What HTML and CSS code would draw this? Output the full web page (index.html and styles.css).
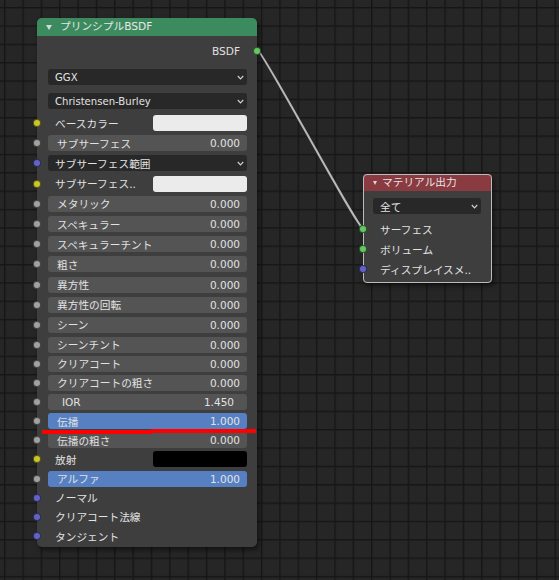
FILE: index.html
```html
<!DOCTYPE html>
<html lang="ja">
<head>
<meta charset="utf-8">
<title>Node Editor</title>
<link rel="stylesheet" href="styles.css">
</head>
<body>
<div class="canvas">
  <svg class="wires" width="559" height="580" viewBox="0 0 559 580">
    <defs>
      <pattern id="grid" x="4" y="7" width="18.35" height="18.35" patternUnits="userSpaceOnUse">
        <rect x="0" y="0" width="18.35" height="1.4" class="gridline"/>
        <rect x="0" y="0" width="1.4" height="18.35" class="gridline"/>
      </pattern>
    </defs>
    <rect x="0" y="0" width="559" height="580" fill="url(#grid)"/>
    <path d="M257.5 50 C 263 51, 357 228, 363.5 229" class="wire-edge"/>
    <path d="M257.5 50 C 263 51, 357 228, 363.5 229" class="wire"/>
  </svg>

  <div class="node node-bsdf">
    <div class="header header-green">
      <span class="tri"></span>
      <span class="title">プリンシプルBSDF</span>
    </div>
    <div class="out-row">
      <span>BSDF</span>
      <span class="socket out green"></span>
    </div>
    <div class="menus">
      <div class="dropdown"><span>GGX</span><svg class="chev" width="7" height="5" viewBox="0 0 7 5"><polyline points="0.8,1 3.5,3.8 6.2,1"/></svg></div>
      <div class="dropdown"><span>Christensen-Burley</span><svg class="chev" width="7" height="5" viewBox="0 0 7 5"><polyline points="0.8,1 3.5,3.8 6.2,1"/></svg></div>
    </div>
    <div class="rows rows-a">
      <div class="row"><span class="socket yellow"></span><span class="label">ベースカラー</span><span class="swatch light"></span></div>
      <div class="row"><span class="socket gray"></span><div class="field"><span class="name">サブサーフェス</span><span>0.000</span></div></div>
      <div class="row"><span class="socket purple"></span><div class="dropdown wide"><span class="name">サブサーフェス範囲</span><svg class="chev" width="7" height="5" viewBox="0 0 7 5"><polyline points="0.8,1 3.5,3.8 6.2,1"/></svg></div></div>
      <div class="row"><span class="socket yellow"></span><span class="label">サブサーフェス..</span><span class="swatch light"></span></div>
      <div class="row"><span class="socket gray"></span><div class="field"><span class="name">メタリック</span><span>0.000</span></div></div>
      <div class="row"><span class="socket gray"></span><div class="field"><span class="name">スペキュラー</span><span>0.000</span></div></div>
      <div class="row"><span class="socket gray"></span><div class="field"><span class="name">スペキュラーチント</span><span>0.000</span></div></div>
      <div class="row"><span class="socket gray"></span><div class="field"><span class="name">粗さ</span><span>0.000</span></div></div>
      <div class="row"><span class="socket gray"></span><div class="field"><span class="name">異方性</span><span>0.000</span></div></div>
      <div class="row"><span class="socket gray"></span><div class="field"><span class="name">異方性の回転</span><span>0.000</span></div></div>
      <div class="row"><span class="socket gray"></span><div class="field"><span class="name">シーン</span><span>0.000</span></div></div>
    </div>
    <div class="rows rows-b">
      <div class="row"><span class="socket gray"></span><div class="field"><span class="name">シーンチント</span><span>0.000</span></div></div>
      <div class="row"><span class="socket gray"></span><div class="field"><span class="name">クリアコート</span><span>0.000</span></div></div>
      <div class="row"><span class="socket gray"></span><div class="field"><span class="name">クリアコートの粗さ</span><span>0.000</span></div></div>
      <div class="row"><span class="socket gray"></span><div class="field field-ior"><span>IOR</span><span>1.450</span></div></div>
      <div class="row"><span class="socket gray"></span><div class="field active"><span class="name">伝播</span><span>1.000</span></div></div>
      <div class="row"><span class="socket gray"></span><div class="field"><span class="name">伝播の粗さ</span><span>0.000</span></div></div>
      <div class="row"><span class="socket yellow"></span><span class="label">放射</span><span class="swatch dark"></span></div>
      <div class="row"><span class="socket gray"></span><div class="field active"><span class="name">アルファ</span><span>1.000</span></div></div>
      <div class="row"><span class="socket purple"></span><span class="label">ノーマル</span></div>
      <div class="row"><span class="socket purple"></span><span class="label">クリアコート法線</span></div>
      <div class="row"><span class="socket purple"></span><span class="label">タンジェント</span></div>
    </div>
  </div>

  <div class="node node-output">
    <div class="header header-red">
      <span class="tri small"></span>
      <span class="title">マテリアル出力</span>
    </div>
    <div class="menus menus-out">
      <div class="dropdown"><span class="name">全て</span><svg class="chev" width="7" height="5" viewBox="0 0 7 5"><polyline points="0.8,1 3.5,3.8 6.2,1"/></svg></div>
    </div>
    <div class="rows rows-out">
      <div class="row"><span class="socket green"></span><span class="label">サーフェス</span></div>
      <div class="row"><span class="socket green"></span><span class="label">ボリューム</span></div>
      <div class="row"><span class="socket purple"></span><span class="label">ディスプレイスメ..</span></div>
    </div>
  </div>

  <div class="mark mark-left"></div>
  <div class="mark mark-right"></div>
</div>
</body>
</html>
```

FILE: styles.css
```css
html, body {
  margin: 0;
  padding: 0;
  background: #232323;
}

.canvas {
  position: relative;
  width: 559px;
  height: 580px;
  overflow: hidden;
  background-color: #262626;
  font-family: "DejaVu Sans", "Noto Sans CJK JP", sans-serif;
  font-size: 10.1px;
  color: #e2e2e2;
}

.wires {
  position: absolute;
  left: 0;
  top: 0;
}

.gridline {
  fill: #161616;
}

.wire-edge {
  fill: none;
  stroke: #2a2a2a;
  stroke-width: 3.4;
}

.wire {
  fill: none;
  stroke: #b8b8b8;
  stroke-width: 2;
}

.node {
  position: absolute;
  background: #3e3e3e;
  border-radius: 5px;
  box-shadow: 2px 3px 5px rgba(0, 0, 0, 0.5);
}

.node-bsdf {
  left: 37px;
  top: 18px;
  width: 220px;
  padding-bottom: 1px;
}

.node-output {
  left: 363px;
  top: 174px;
  width: 129px;
  padding-bottom: 4px;
  outline: 1px solid #bcbcbc;
  outline-offset: -1px;
  border-radius: 4px;
}

.header {
  display: flex;
  align-items: center;
  height: 18px;
  border-radius: 5px 5px 0 0;
  color: #e6e6e6;
}

.header-green {
  background: #3c8b5f;
  padding-left: 9px;
}

.header-red {
  height: 17px;
  background: #8a3a41;
  padding-left: 10px;
  border-radius: 4px 4px 0 0;
}

.tri {
  width: 0;
  height: 0;
  border-left: 3px solid transparent;
  border-right: 3px solid transparent;
  border-top: 5px solid #d8d8d8;
  margin-right: 8px;
}

.tri.small {
  border-left-width: 2.5px;
  border-right-width: 2.5px;
  border-top-width: 4px;
  margin-right: 5px;
}

.title {
  line-height: 18px;
  font-size: 10.7px;
}

.out-row {
  position: relative;
  display: flex;
  justify-content: flex-end;
  align-items: center;
  height: 20px;
  margin-top: 5px;
  padding-right: 17px;
  font-size: 10.6px;
}

.socket {
  position: absolute;
  left: -4px;
  top: 50%;
  width: 8px;
  height: 8px;
  margin-top: -4px;
  box-sizing: border-box;
  border-radius: 50%;
  border: 1px solid rgba(0, 0, 0, 0.55);
}

.socket.out {
  left: auto;
  right: -4px;
}

.green { background: #63c763; }
.yellow { background: #c7c729; }
.gray { background: #a1a1a1; }
.purple { background: #6363c7; }

.menus {
  display: flex;
  flex-direction: column;
  gap: 8px;
  padding: 8px 10px 0 11px;
}

.menus-out {
  padding: 7px 11px 0 10px;
}

.dropdown {
  display: flex;
  align-items: center;
  justify-content: space-between;
  height: 16px;
  background: #282828;
  border-radius: 3px;
  padding: 0 2px 0 7px;
}

.dropdown.wide {
  flex: 1;
}

.chev {
  fill: none;
  stroke: #cfcfcf;
  stroke-width: 1.2;
  margin-right: 1px;
}

.rows {
  display: flex;
  flex-direction: column;
}

.rows-a {
  margin-top: 4px;
}

.rows-out {
  margin-top: 5px;
}

.row {
  position: relative;
  display: flex;
  align-items: center;
  height: 20.2px;
  padding: 0 10px 0 11px;
}

.rows-b .row {
  height: 19.15px;
}

.rows-out .row {
  height: 20px;
  padding: 0 11px 0 10px;
}

.label {
  flex: 1;
  padding-left: 7px;
  white-space: nowrap;
  font-size: 10.7px;
}

.name {
  font-size: 10.7px;
}

.swatch {
  width: 94px;
  height: 16px;
  border-radius: 3px;
}

.swatch.light { background: #ebebeb; }
.swatch.dark { background: #000000; }

.field {
  flex: 1;
  display: flex;
  align-items: center;
  justify-content: space-between;
  height: 16px;
  background: #545454;
  border-radius: 3px;
  padding: 0 7px 0 9px;
  white-space: nowrap;
  font-size: 10.5px;
}

.field.field-ior {
  padding: 0 13px 0 14px;
}

.field.active {
  background: #5680c2;
}

.mark {
  position: absolute;
  height: 4px;
  background: #ff0000;
}

.mark-left {
  left: 42px;
  top: 430px;
  width: 110px;
}

.mark-right {
  left: 151px;
  top: 429px;
  width: 105px;
}
```
